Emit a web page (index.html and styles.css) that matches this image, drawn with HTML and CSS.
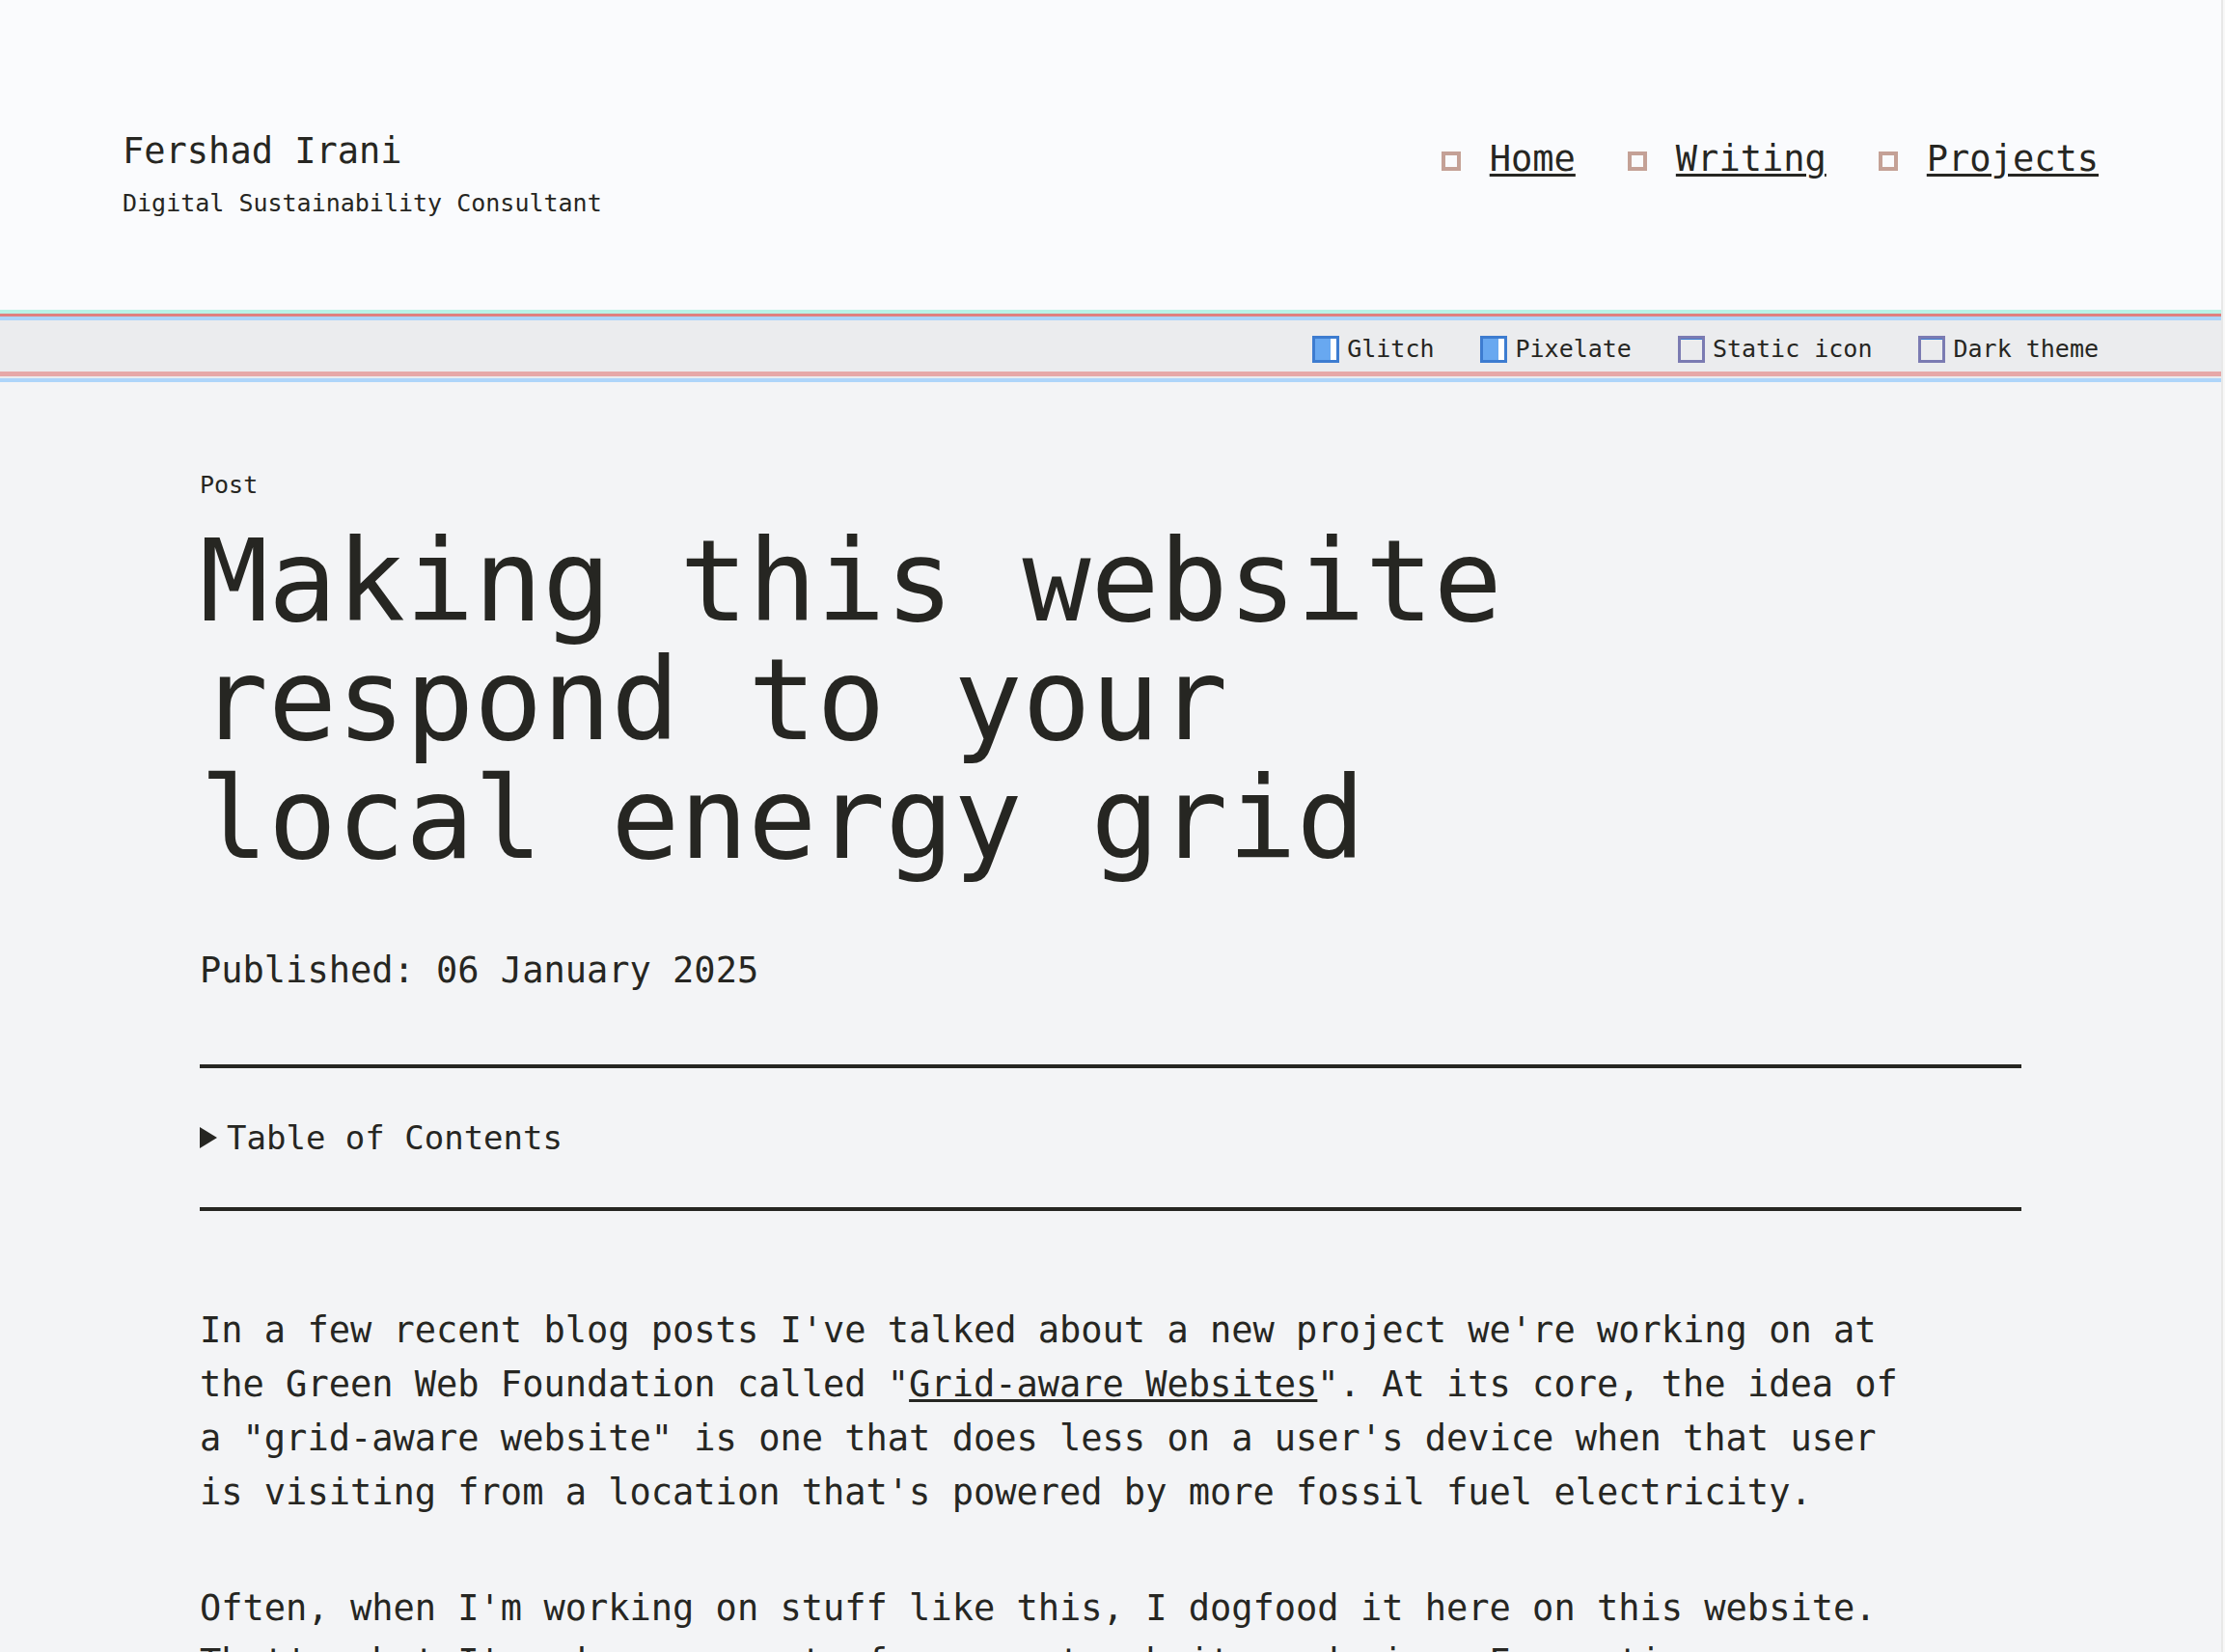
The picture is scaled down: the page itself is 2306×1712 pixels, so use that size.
FILE: index.html
```html
<!DOCTYPE html>
<html lang="en">
<head>
    <meta charset="UTF-8">
    <meta name="viewport" content="width=device-width, initial-scale=1.0">
    <title>Making this website respond to your local energy grid - Fershad Irani</title>
    <link rel="stylesheet" href="styles.css">
</head>
<body>
    <div class="page">
        <header class="site-header">
            <div class="brand">
                <p class="brand-name">Fershad Irani</p>
                <p class="brand-role">Digital Sustainability Consultant</p>
            </div>
            <nav>
                <ul class="nav-list">
                    <li><a href="#home">Home</a></li>
                    <li><a href="#writing">Writing</a></li>
                    <li><a href="#projects">Projects</a></li>
                </ul>
            </nav>
        </header>

        <!-- Display settings -->
        <form class="settings">
            <label><input type="checkbox" name="glitch" checked>Glitch</label>
            <label><input type="checkbox" name="pixelate" checked>Pixelate</label>
            <label><input type="checkbox" name="static">Static icon</label>
            <label><input type="checkbox" name="dark">Dark theme</label>
        </form>

        <main>
            <p class="post-type">Post</p>
            <h1>Making this website respond to your local energy grid</h1>
            <p class="published">Published: <time datetime="2025-01-06">06 January 2025</time></p>

            <details class="toc">
                <summary>Table of Contents</summary>
            </details>

            <article>
                <p>In a few recent blog posts I've talked about a new project we're working on at the Green Web Foundation called "<a href="#grid-aware">Grid-aware Websites</a>". At its core, the idea of a "grid-aware website" is one that does less on a user's device when that user is visiting from a location that's powered by more fossil fuel electricity.</p>
                <p>Often, when I'm working on stuff like this, I dogfood it here on this website. That's what I've done as part of a recent website redesign. Every time</p>
            </article>
        </main>
    </div>
</body>
</html>
```
FILE: styles.css
```css
:root {
    --text: #262622;
    --page-bg: #f3f4f6;
    --header-bg: #fafbfd;
    --bar-bg: #ebecee;
    --mint: #b9f2e6;
    --red: #e07f7e;
    --pink: #e6a8a7;
    --sky: #aed5fa;
    --blue: #3d7cd0;
    --gutter: 127px;
}

*, *::before {
    box-sizing: border-box;
}

body {
    margin: 0;
    padding-right: 2px;
    background-color: #f8f8f8;
    color: var(--text);
    font-family: "DejaVu Sans Mono", monospace;
    font-size: 37px;
    line-height: 56px;
}

p, h1, ul {
    margin: 0;
    padding: 0;
}

a {
    color: inherit;
    text-decoration-thickness: 3px;
    text-underline-offset: 3px;
}

.page {
    height: 100vh;
    overflow: hidden;
    background-color: var(--page-bg);
    border-right: 2px solid #e8e8e8;
}

/* Header */
.site-header {
    display: flex;
    justify-content: space-between;
    align-items: flex-start;
    padding: 129px var(--gutter) 96px;
    background-color: var(--header-bg);
}
.brand-role {
    margin-top: 8px;
    font-size: 25px;
    line-height: 36px;
}
.nav-list {
    display: flex;
    gap: 54px;
    margin-top: 8px;
    list-style: none;
}
.nav-list li::before {
    content: "";
    display: inline-block;
    width: 20px;
    height: 20px;
    margin-right: 30px;
    border: 4px solid #c4a196;
}

/* Settings bar, with offset coloured lines above and below */
.settings {
    position: relative;
    display: flex;
    justify-content: flex-end;
    gap: 48px;
    padding: 16px var(--gutter) 5px;
    background-color: var(--bar-bg);
    border-top: 3px solid var(--red);
    border-bottom: 5px solid var(--pink);
    box-shadow: inset 0 4px var(--sky), 0 -4px var(--mint), 0 2px var(--bar-bg), 0 6px var(--sky);
    font-size: 25px;
    line-height: 36px;
}
.settings label {
    display: flex;
    align-items: center;
    gap: 8px;
}
.settings input {
    appearance: none;
    width: 28px;
    height: 28px;
    margin: 0;
    border: 3px solid #7b7bb2;
    box-shadow: inset 0 1px var(--blue);
}
.settings input:checked {
    border-color: var(--blue);
    background: linear-gradient(to right, #68a8f0 16px, #fff 16px) padding-box;
    box-shadow: none;
}

/* Post */
main {
    padding: 95px 207px;
}
.post-type {
    font-size: 25px;
    line-height: 36px;
}
h1 {
    max-width: 20ch;
    margin-top: 20px;
    font-size: 118px;
    font-weight: normal;
    line-height: 123px;
}
.published {
    margin-top: 68px;
}
.toc {
    margin: 69px 0 96px;
    padding: 44px 0;
    border-top: 4px solid var(--text);
    border-bottom: 4px solid var(--text);
    font-size: 34px;
}
.toc summary {
    display: flex;
    align-items: center;
    gap: 10px;
    list-style: none;
}
.toc summary::before {
    content: "";
    width: 18px;
    height: 22px;
    background-color: var(--text);
    clip-path: polygon(0 0, 100% 50%, 0 100%);
}
article p {
    max-width: 80ch;
    margin-bottom: 64px;
}
```
